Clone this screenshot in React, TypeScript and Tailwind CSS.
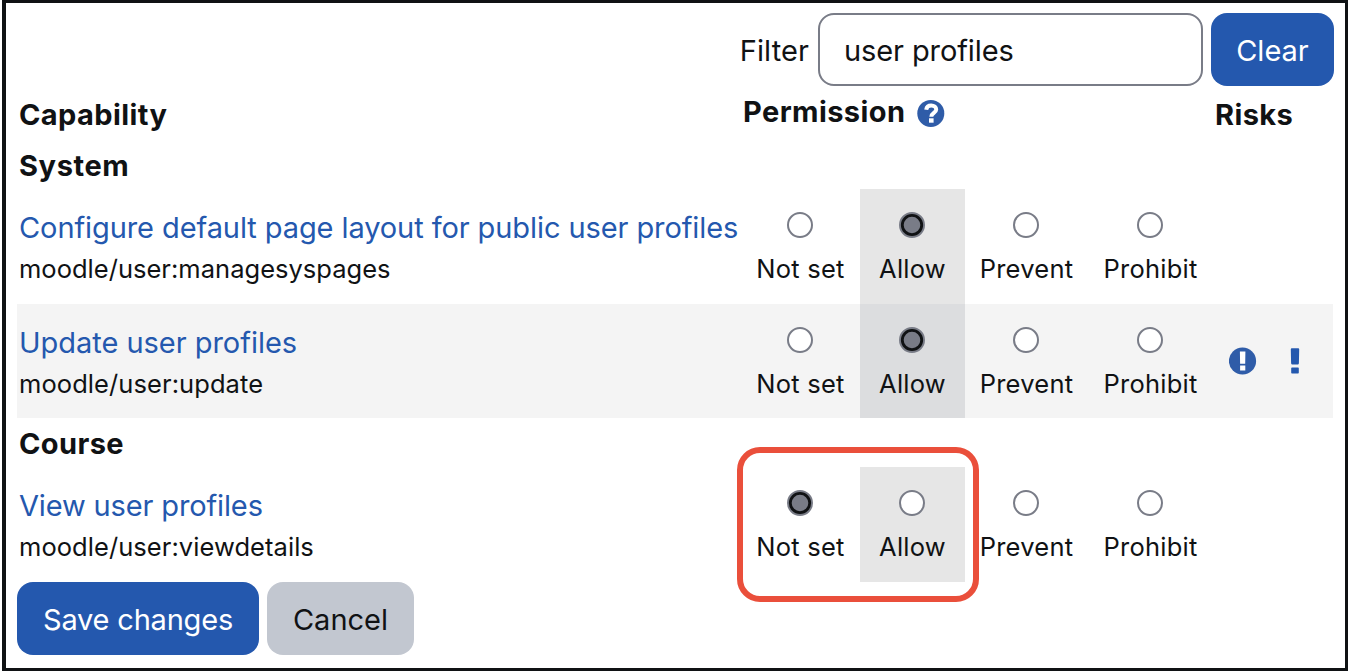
import React from "react";

type Row = { name: string; cap: string; nameCls: string; capCls: string; selected: number; striped?: boolean; risks?: boolean; height: string; marked?: boolean };

const options = [
  { label: "Not set", cls: "w-[120px]" },
  { label: "Allow", cls: "w-[105px] pr-px" },
  { label: "Prevent", cls: "w-[122px]" },
  { label: "Prohibit", cls: "w-[126px]" },
];

function Radio({ checked }: { checked: boolean }) {
  return (
    <svg className="size-[26px]" viewBox="0 0 26 26">
      <circle cx="13" cy="13" r="12" fill={checked ? "#797c87" : "#fff"} stroke="#797c87" strokeWidth="2" />
      {checked && <circle cx="13" cy="13" r="9.7" fill="none" stroke="#101214" strokeWidth="2.8" />}
    </svg>
  );
}

function CapabilityRow({ row }: { row: Row }) {
  return (
    <div className={`relative flex ${row.height} ${row.striped ? "bg-[#f4f4f4]" : ""}`}>
      <div className="w-[723px] shrink-0 pt-[18px] pl-[2px] whitespace-nowrap">
        <a className={`block h-[42px] text-[29px] leading-[42px] text-[#2458ae] ${row.nameCls}`}>{row.name}</a>
        <div className={`h-[40px] text-[25.5px] leading-[40px] ${row.capCls}`}>{row.cap}</div>
      </div>
      {options.map((o, i) => (
        <label
          key={o.label}
          className={`flex shrink-0 flex-col items-center pt-[23px] text-[25.5px] leading-[36px] tracking-[0.25px] whitespace-nowrap ${o.cls} ${i === 1 ? (row.striped ? "bg-[#dcdddf]" : "bg-[#e6e6e6]") : ""}`}
        >
          <Radio checked={row.selected === i} />
          <span className="mt-[13px] pl-px">{o.label}</span>
        </label>
      ))}
      <div className="flex grow items-center pl-[16px]">
        {row.risks && (
          <>
            <svg className="size-[28px]" viewBox="0 0 28 28">
              <circle cx="13.5" cy="14" r="13.6" fill="#2f5ca8" />
              <path d="M10.900 4.400h5.500l-.2 12.400h-5.100z M11.100 18.600h5.200v5h-5.200z" fill="#fff" />
            </svg>
            <svg className="mt-px ml-[33px] h-[28px] w-[10px]" viewBox="0 0 10 28">
              <path d="M.8 1.200q0-1 1-1h6.400q1 0 1 1l-.3 14q-.1 1.200-1.200 1.200H2.300q-1 0-1.200-1.200z M1.200 20.200q0-.8.800-.8h6q.8 0 .8.800v4.600q0 .8-.8.800H2q-.8 0-.8-.8z" fill="#2458ae" />
            </svg>
          </>
        )}
      </div>
      {row.marked && <div className="absolute top-[-20px] left-[720px] h-[155px] w-[242px] rounded-[23px] border-6 border-[#ea4f3b]" />}
    </div>
  );
}

const rows: Row[] = [
  { name: "Configure default page layout for public user profiles", cap: "moodle/user:managesyspages", nameCls: "tracking-[-0.09px]", capCls: "tracking-[0.02px]", selected: 1, height: "h-[115px]" },
  { name: "Update user profiles", cap: "moodle/user:update", nameCls: "tracking-[-0.03px]", capCls: "tracking-[0.08px]", selected: 1, striped: true, risks: true, height: "h-[114px]" },
  { name: "View user profiles", cap: "moodle/user:viewdetails", nameCls: "tracking-[-0.14px]", capCls: "tracking-[0.06px]", selected: 0, height: "h-[115px]", marked: true },
];

export default function App() {
  return (
    <div className="h-[671px] w-[1350px] overflow-hidden bg-white pr-[2px] pl-[2px] font-['Inter',sans-serif] text-[29px] text-[#101214]">
      <div className="h-full border-x-4 border-r-3 border-y-3 border-[#101214] pt-[10px] pl-[11px]">
        <div className="flex h-[73px] w-[1317px] items-center justify-end leading-[40px]">
          <label className="mt-[2px] mr-[9px] tracking-[0.1px]">Filter</label>
          <input
            readOnly
            value="user profiles"
            className="h-[73px] w-[385px] rounded-[16px] border-2 border-[#797c87] bg-white pt-[2px] pl-[24px] tracking-[-0.1px] outline-none"
          />
          <button className="ml-[8px] h-[73px] w-[123px] rounded-[16px] bg-[#2458ae] pt-[2px] text-white">Clear</button>
        </div>
        <div className="flex h-[55px] pl-[2px] leading-[40px] font-bold tracking-[0.4px]">
          <div className="w-[724px] pt-[9px]">Capability</div>
          <div className="flex w-[472px] pt-[6px]">
            Permission
            <svg className="mt-[7px] ml-[12px] size-[28px]" viewBox="0 0 28 28">
              <circle cx="13.800" cy="14.400" r="13.5" fill="#2f5ca8" />
              <path d="M9.200 10.700C9.600 7.900 11.400 6.500 14.200 6.500c2.900 0 5 1.600 5 4.100 0 3.400-4.900 3.400-4.900 7.200" fill="none" stroke="#fff" strokeWidth="4" />
              <path d="M12 19.300h4.600v4.400H12z" fill="#fff" />
            </svg>
          </div>
          <div className="pt-[9px]">Risks</div>
        </div>
        <div className="h-[48px] pt-[5px] pl-[2px] leading-[40px] font-bold tracking-[0.6px]">System</div>
        <div className="w-[1316px]">
          <CapabilityRow row={rows[0]} />
          <CapabilityRow row={rows[1]} />
          <div className="h-[49px] pt-[6px] pl-[2px] leading-[40px] font-bold tracking-[0.4px]">Course</div>
          <CapabilityRow row={rows[2]} />
        </div>
        <div className="flex gap-[8px]">
          <button className="h-[73px] w-[242px] rounded-[16px] bg-[#2458ae] pt-[2px] tracking-[-0.2px] text-white">Save changes</button>
          <button className="h-[73px] w-[147px] rounded-[16px] bg-[#c2c7d0] pt-[2px]">Cancel</button>
        </div>
      </div>
    </div>
  );
}
